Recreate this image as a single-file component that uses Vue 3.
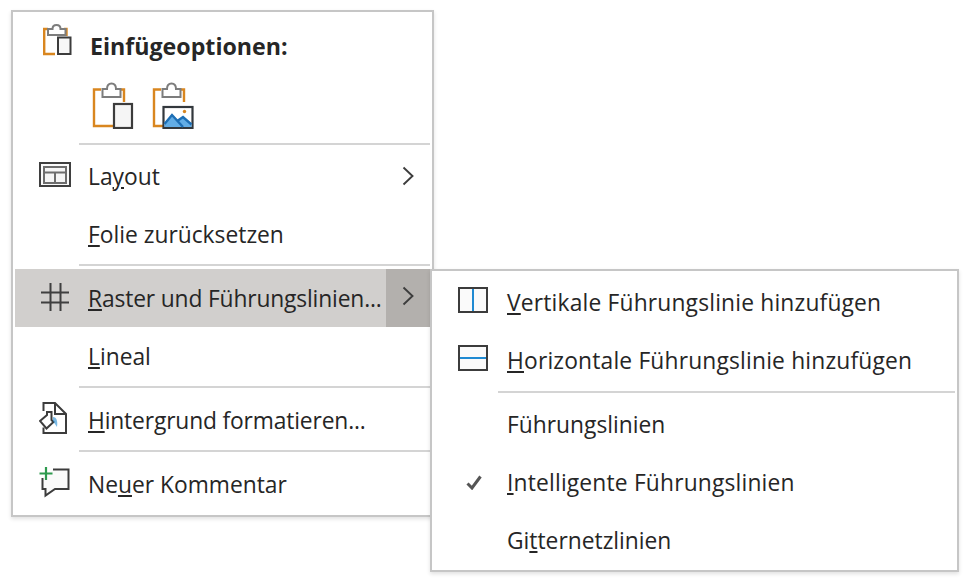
<script setup>
const blue = "#1f8ad2";
</script>

<template>
  <div class="page">
    <div class="menu">
      <div class="paste-head">
        <div class="cell-icon">
          <svg class="ic-small" width="30" height="33" viewBox="0 0 30 33">
            <path d="M5 5H1.200V30H12" fill="none" stroke="#d9861f" stroke-width="2.400" />
            <path d="M21 5H23.500V12" fill="none" stroke="#d9861f" stroke-width="2.400" />
            <path d="M5 11V5H9.500C9.500 2.500 11 1 13.500 1S17.500 2.500 17.500 5H22.500V11Z" fill="#fff" stroke="#7d7d7d" stroke-width="2" />
            <rect x="15" y="13.500" width="12.500" height="16.500" fill="#f7f7f7" stroke="#3c3c3c" stroke-width="2" />
          </svg>
        </div>
        <strong class="head-text">Einfügeoptionen:</strong>
        <div class="paste-icons">
          <svg width="42" height="47" viewBox="0 0 42 47">
            <path d="M9 7.500H2V44H21" fill="none" stroke="#d9861f" stroke-width="2.400" />
            <path d="M28 7.500H32V20" fill="none" stroke="#d9861f" stroke-width="2.400" />
            <path d="M10.500 15V7H15C15 3 17 1.500 19.500 1.500S24 3 24 7H28.500V15Z" fill="#fff" stroke="#7d7d7d" stroke-width="2" />
            <rect x="22" y="22" width="18" height="24" fill="#f5f5f5" stroke="#3c3c3c" stroke-width="2.200" />
          </svg>
          <svg width="42" height="47" viewBox="0 0 42 47">
            <path d="M9 7.500H2V44H11" fill="none" stroke="#d9861f" stroke-width="2.400" />
            <path d="M28 7.500H32V20" fill="none" stroke="#d9861f" stroke-width="2.400" />
            <path d="M10.500 15V7H15C15 3 17 1.500 19.500 1.500S24 3 24 7H28.500V15Z" fill="#fff" stroke="#7d7d7d" stroke-width="2" />
            <rect x="11.500" y="25" width="29" height="21" fill="#fff" stroke="#33383d" stroke-width="2.200" />
            <path d="M12.500 45V41L20 32 26 38 31 35 39.500 42V45Z" fill="#62ade6" />
            <path d="M12.500 42L20 33 31 45M26 38.500L31 35 39.500 42.500" fill="none" stroke="#1e6fb5" stroke-width="2.400" />
            <circle cx="32.500" cy="29.500" r="1.700" fill="#d9861f" />
          </svg>
        </div>
      </div>

      <div class="sep head-sep"></div>

      <div class="row">
        <div class="cell-icon">
          <svg class="up" width="32" height="25" viewBox="0 0 32 25">
            <rect x="1" y="1" width="30" height="23" fill="#fafafa" stroke="#3f3f3f" stroke-width="2" />
            <rect x="5" y="5" width="22" height="16" fill="#f5f5f5" stroke="#6d6d6d" stroke-width="2" />
            <path d="M5 10.500H27M16 10.500V21" fill="none" stroke="#6d6d6d" stroke-width="2" />
          </svg>
        </div>
        <span class="label">La<u>y</u>out</span>
        <div class="cell-arrow">
          <svg width="12" height="20" viewBox="0 0 12 20"><path d="M1.500 1.500L10.500 10 1.500 18.500" fill="none" stroke="#3d3d3d" stroke-width="1.900" /></svg>
        </div>
      </div>

      <div class="row">
        <div class="cell-icon"></div>
        <span class="label"><u>F</u>olie zurücksetzen</span>
      </div>

      <div class="sep"></div>

      <div class="row active">
        <div class="cell-icon">
          <svg class="ic-grid" width="28" height="28" viewBox="0 0 28 28">
            <path d="M9.500 0V28M19.500 0V28M0 9.500H28M0 19.500H28" fill="none" stroke="#3f3f3f" stroke-width="2" />
          </svg>
        </div>
        <span class="label tight"><u>R</u>aster und Führungslinien...</span>
        <div class="cell-arrow dark">
          <svg class="up" width="12" height="20" viewBox="0 0 12 20"><path d="M1.500 1.500L10.500 10 1.500 18.500" fill="none" stroke="#3d3d3d" stroke-width="1.900" /></svg>
        </div>
      </div>

      <div class="row">
        <div class="cell-icon"></div>
        <span class="label"><u>L</u>ineal</span>
      </div>

      <div class="sep"></div>

      <div class="row">
        <div class="cell-icon">
          <svg class="up" width="29" height="33" viewBox="0 0 29 33">
            <path d="M4.500 9V1H16L27 12V31H4.500V25.500" fill="#fff" stroke="#3c3c3c" stroke-width="2" />
            <path d="M16 1V12H27" fill="none" stroke="#3c3c3c" stroke-width="2" />
            <path d="M1 19L8 13V10H12.500V18L14.500 20 7.500 26.500Z" fill="#fff" stroke="#3c3c3c" stroke-width="2" />
            <path d="M14 15C17 15 19 18 18 25L14 19Z" :fill="blue" opacity="0.6" />
          </svg>
        </div>
        <span class="label tight"><u>H</u>intergrund formatieren...</span>
      </div>

      <div class="sep"></div>

      <div class="row">
        <div class="cell-icon">
          <svg class="up" width="31" height="31" viewBox="0 0 31 31">
            <path d="M14 2.500H29.500V22H16L6.500 28.500V22H3.500V11" fill="#fafafa" stroke="#3c3c3c" stroke-width="2" />
            <path d="M7 0V13M0.500 6.500H13.500" fill="none" stroke="#2e9a4e" stroke-width="2.200" />
          </svg>
        </div>
        <span class="label">Ne<u>u</u>er Kommentar</span>
      </div>

      <div class="submenu">
        <div class="row">
          <div class="sub-icon">
            <svg class="up" width="30" height="26" viewBox="0 0 30 26">
              <rect x="1" y="1" width="28" height="24" fill="#fafafa" stroke="#3c3c3c" stroke-width="2" />
              <path d="M15 2V24" fill="none" :stroke="blue" stroke-width="2" />
            </svg>
          </div>
          <span class="label wide"><u>V</u>ertikale Führungslinie hinzufügen</span>
        </div>
        <div class="row">
          <div class="sub-icon">
            <svg class="up" width="30" height="26" viewBox="0 0 30 26">
              <rect x="1" y="1" width="28" height="24" fill="#fafafa" stroke="#3c3c3c" stroke-width="2" />
              <path d="M2 13H28" fill="none" :stroke="blue" stroke-width="2" />
            </svg>
          </div>
          <span class="label wide"><u>H</u>orizontale Führungslinie hinzufügen</span>
        </div>
        <div class="sep sub-sep"></div>
        <div class="row">
          <div class="sub-icon"></div>
          <span class="label">Führun<u>g</u>slinien</span>
        </div>
        <div class="row">
          <div class="sub-icon check">
            <svg width="16" height="15" viewBox="0 0 16 15">
              <path d="M1.500 8.500L6 13 14.500 1.500" fill="none" stroke="#555" stroke-width="3" />
            </svg>
          </div>
          <span class="label wide"><u>I</u>ntelligente Führungslinien</span>
        </div>
        <div class="row">
          <div class="sub-icon"></div>
          <span class="label">Gi<u>t</u>ternetzlinien</span>
        </div>
      </div>
    </div>
  </div>
</template>

<style scoped>
.page {
  width: 970px;
  height: 582px;
  padding: 10px 0 0 11px;
  box-sizing: border-box;
  background: #fff;
  overflow: hidden;
  font-family: "Open Sans", "Noto Sans", sans-serif;
  font-size: 22.8px;
  color: #262626;
}

.menu {
  position: relative;
  width: 423px;
  box-sizing: border-box;
  padding: 2px;
  border: 2px solid #c6c6c6;
  background: #fff;
  box-shadow: 0 2px 4px rgba(0, 0, 0, 0.12);
}

.paste-head {
  display: grid;
  grid-template-columns: 73px 1fr;
  grid-template-rows: 60px 68px;
}

.cell-icon {
  display: flex;
  align-items: center;
  padding-left: 24px;
}

.ic-small {
  margin-left: 4px;
  margin-bottom: 7px;
}

.head-text {
  align-self: center;
  margin-top: 4px;
  margin-left: 2px;
  font-weight: 700;
  font-size: 23.2px;
}

.paste-icons {
  grid-column: 2;
  display: flex;
  gap: 18px;
  padding-left: 4px;
  padding-top: 8px;
}

.sep {
  height: 2px;
  margin: 1px 0 3px 64px;
  background: #d4d4d4;
}

.head-sep {
  margin-bottom: 2px;
}

.row {
  display: grid;
  grid-template-columns: 73px 1fr 44px;
  align-items: center;
  height: 58px;
}

.row .cell-icon {
  height: 100%;
}

.up {
  margin-bottom: 4px;
}

.ic-grid {
  margin-left: 2px;
  margin-bottom: 2px;
}

.label {
  white-space: nowrap;
  grid-column: 2;
}

.wide {
  letter-spacing: 0.18px;
}

.tight {
  letter-spacing: -0.15px;
}

.label u {
  text-underline-offset: 2px;
  text-decoration-thickness: 1.5px;
}

.cell-arrow {
  grid-column: 3;
  height: 100%;
  display: flex;
  align-items: center;
  justify-content: center;
}

.active {
  background: #d1cfcd;
}

.dark {
  background: #b3b0ad;
}

.submenu {
  position: absolute;
  left: 417px;
  top: 257px;
  width: 529px;
  height: 303px;
  box-sizing: border-box;
  padding: 2px;
  border: 2px solid #c6c6c6;
  background: #fff;
  box-shadow: 0 2px 4px rgba(0, 0, 0, 0.12);
}

.submenu .row {
  grid-template-columns: 73px 1fr;
}

.sub-icon {
  display: flex;
  align-items: center;
  padding-left: 24px;
}

.check {
  padding-left: 32px;
}

.sub-sep {
  margin-top: 2px;
  margin-bottom: 2px;
}
</style>
